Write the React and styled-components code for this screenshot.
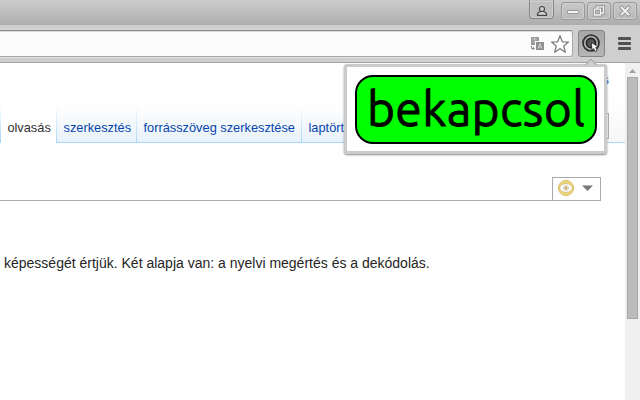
import React from "react";
import styled, { createGlobalStyle } from "styled-components";

const GlobalStyle = createGlobalStyle`
  * { box-sizing: border-box; }
  body { margin: 0; overflow: hidden; background: #fff; }
  button { font: inherit; padding: 0; margin: 0; }
`;

const Browser = styled.div`
  position: relative;
  width: 640px;
  height: 400px;
  overflow: hidden;
  display: flex;
  flex-direction: column;
  background: #fff;
  font-family: "Liberation Sans", Arial, sans-serif;
`;

const TitleBar = styled.header`
  height: 25px;
  flex: none;
  display: flex;
  align-items: flex-start;
  justify-content: flex-end;
  gap: 2px;
  padding: 2px 3px 0 0;
  background: linear-gradient(#cccccc, #adadad);
`;

const WindowButton = styled.button`
  width: 24px;
  height: 18px;
  display: grid;
  place-items: center;
  border: 1px solid #999;
  border-radius: 3px;
  background: linear-gradient(#c8c8c8, #b9b9b9);
  box-shadow: inset 0 0 0 1px #cecece;
`;

const ProfileButton = styled(WindowButton)`
  width: 25px;
  height: 19px;
  margin: -2px 5px 0 0;
  padding-top: 2px;
  border-color: #858585;
  border-top-color: transparent;
  border-radius: 0 0 4px 4px;
  background: #bfbfbf;
`;

const Toolbar = styled.div`
  height: 38px;
  flex: none;
  display: flex;
  align-items: flex-start;
  padding-top: 5px;
  background: #cfcfcf;
  border-bottom: 1px solid #a3a3a3;
`;

const AddressBar = styled.div`
  width: 573px;
  height: 27px;
  display: flex;
  align-items: center;
  justify-content: flex-end;
  gap: 5px;
  padding-right: 2px;
  background: #fcfcfc;
  border: 1px solid #a9a9a9;
  border-left: 0;
  border-top-color: #868686;
  border-radius: 0 3px 3px 0;
  box-shadow: 0 1px #e2e2e2, 0 -1px #d9d9d9, inset 0 1px #e0e0e0;
`;

const ExtensionButton = styled.button`
  width: 27px;
  height: 27px;
  margin-left: 5px;
  display: grid;
  place-items: center;
  border: 1px solid #858585;
  border-radius: 3px;
  background: linear-gradient(#a6a6a6, #b6b6b6);
`;

const MenuButton = styled.button`
  width: 13px;
  height: 27px;
  margin-left: 13px;
  display: grid;
  align-content: center;
  gap: 2px;
  border: 0;
  background: none;
`;

const MenuLine = styled.span`
  height: 3px;
  border-radius: 1px;
  background: #505050;
`;

const Viewport = styled.div`
  flex: 1;
  display: flex;
  min-height: 0;
`;

const Page = styled.main`
  width: 625px;
  display: flex;
  flex-direction: column;
`;

const PageHead = styled.div`
  height: 80px;
  flex: none;
  display: flex;
  flex-direction: column;
  background: linear-gradient(#fff 45%, #f6f6f6);
`;

const UserLinks = styled.div`
  height: 42px;
  padding: 9px 16px 0 0;
  text-align: right;
  color: #0645ad;
  font-size: 12.8px;
  line-height: 15px;
`;

const TabRow = styled.nav`
  height: 38px;
  display: flex;
  border-bottom: 1px solid #a7d7f9;
`;

const Tab = styled.a`
  width: ${(p) => p.$width}px;
  height: 38px;
  flex: none;
  padding: 15px 0 0 ${(p) => (p.$active ? 7.4 : 6.5)}px;
  color: ${(p) => (p.$active ? "#333" : "#0645ad")};
  font-size: 12.8px;
  line-height: 16px;
  white-space: nowrap;
  background:
    linear-gradient(#fff, #a7d7f9) ${(p) => (p.$active ? "left" : "right")} top / 1px 100% no-repeat,
    ${(p) => (p.$active ? "#fff" : "linear-gradient(#fff, #e8f2f8) 0 0 / 100% 37px no-repeat")};
`;

const FirstEdge = styled.span`
  width: 1px;
  height: 38px;
  background: linear-gradient(#fff, #a7d7f9);
`;

const SearchBox = styled.div`
  width: 40px;
  height: 26px;
  margin: 8px 16px 0 auto;
  border: 1px solid #aaa;
  background: #fff;
`;

const TitleRow = styled.div`
  display: flex;
  align-items: flex-end;
  height: 58px;
  flex: none;
`;

const Rule = styled.div`
  width: 552px;
  height: 1px;
  background: #aaa;
`;

const StatusBox = styled.button`
  width: 49px;
  height: 24px;
  display: flex;
  align-items: center;
  gap: 7px;
  padding: 0 0 2px 4px;
  border: 1px solid #aaa;
  background: #fff;
`;

const Paragraph = styled.p`
  margin: 54px 0 0 4px;
  color: #252525;
  font-size: 14px;
  line-height: 16px;
  white-space: nowrap;
`;

const Scrollbar = styled.div`
  width: 15px;
  display: flex;
  flex-direction: column;
  align-items: center;
  background: #f0f0f0;
`;

const ScrollArrow = styled.svg`
  width: 15px;
  height: 14px;
  flex: none;
`;

const ScrollThumb = styled.div`
  width: 11px;
  height: 242px;
  border: 1px solid #a7a7a7;
  background: #bcbcbc;
`;

const Popup = styled.section`
  position: absolute;
  left: 344px;
  top: 64px;
  width: 263px;
  height: 90px;
  padding: 8px;
  border: 3px solid #cbcbcb;
  border-radius: 3px;
  background: #fff;
  box-shadow: 0 1px 2px #888;
`;

const PopupPointer = styled.svg`
  position: absolute;
  left: 234px;
  top: -10px;
`;

const ToggleButton = styled.button`
  display: grid;
  place-items: center;
  width: 242px;
  height: 69px;
  border: 2px solid #000;
  border-radius: 18px;
  background: #00ff00;
  color: #000;
`;

const ToggleLabel = styled.span`
  margin-top: -3px;
  font-family: Ubuntu, "Noto Sans", sans-serif;
  font-size: 48px;
  line-height: 64px;
  letter-spacing: 0.3px;
  -webkit-text-stroke: 0.8px #000;
`;

const PersonIcon = () => (
  <svg width="12" height="12" viewBox="0 0 12 12">
    <circle cx="6" cy="4" r="2.5" fill="#d2d2d2" stroke="#444" strokeWidth="1.2" />
    <path d="M1.5 10.4V9C1.5 7.5 3 7 4.4 6.5h3.2C9 7 10.5 7.5 10.5 9v1.4Z" fill="#d2d2d2" stroke="#444" strokeWidth="1.2" />
  </svg>
);

const MinimizeIcon = () => (
  <svg width="14" height="12" viewBox="0 0 14 12">
    <rect x="1.5" y="5.5" width="11" height="3" rx=".5" fill="#f2f2f2" stroke="#999" />
  </svg>
);

const RestoreIcon = () => (
  <svg width="14" height="12" viewBox="0 0 14 12" fill="none">
    <path d="M5 4V1.8h6.5V8H9M2.5 4.2h6V10h-6Z" stroke="#929292" strokeWidth="3" />
    <path d="M5 4V1.8h6.5V8H9M2.5 4.2h6V10h-6Z" stroke="#f2f2f2" strokeWidth="1.3" />
  </svg>
);

const CloseIcon = () => (
  <svg width="14" height="12" viewBox="0 0 14 12" fill="none" strokeLinecap="square">
    <path d="m3.5 2.5 7 7m0-7-7 7" stroke="#929292" strokeWidth="3.5" />
    <path d="m3.5 2.5 7 7m0-7-7 7" stroke="#f2f2f2" strokeWidth="1.9" />
  </svg>
);

const TranslateIcon = () => (
  <svg width="15" height="15" viewBox="0 0 15 15">
    <path d="M1 1h8v4H5v4H1Z" fill="#9a9a9a" />
    <path d="M2.5 3h4M4.5 2v2.5M3 6.5 5 4" stroke="#c8c8c8" fill="none" />
    <path d="M6 6h8v8H6Z" fill="#8f8f8f" />
    <path d="m8 12.5 2-5 2 5M8.7 11h2.6" stroke="#d5d5d5" fill="none" />
    <path d="M1.5 10v2.5H4M2.8 11l1.5 1.5L2.8 14" stroke="#888" fill="none" />
  </svg>
);

const StarIcon = () => (
  <svg width="20" height="20" viewBox="0 0 20 20">
    <path d="m10 1.8 2.3 6 6.2.3-4.8 3.9 1.7 6.2-5.4-3.5-5.4 3.5L6.3 12 1.5 8.1l6.2-.3Z" fill="#fff" stroke="#777" strokeWidth="1.2" strokeLinejoin="round" />
  </svg>
);

const ClickIcon = () => (
  <svg width="19" height="19" viewBox="0 0 19 19">
    <circle cx="9" cy="9" r="8" fill="none" stroke="#303030" strokeWidth="1.7" />
    <circle cx="9" cy="9" r="4.6" fill="#555" stroke="#222" strokeWidth="1.6" />
    <path d="m9.5 8.5.3 7.6 1.8-1.7 1.5 3.1 2.1-1-1.4-3.1 2.6-.4Z" fill="#fff" stroke="#222" strokeWidth=".8" />
  </svg>
);

const EyeIcon = () => (
  <svg width="18" height="18" viewBox="0 0 18 18">
    <circle cx="9" cy="9" r="7.6" fill="#edd67c" stroke="#dec16a" />
    <ellipse cx="9" cy="9" rx="6.2" ry="4.3" fill="#fff" stroke="#c4b583" strokeWidth=".7" />
    <circle cx="9" cy="9" r="2.7" fill="#f3f1e8" stroke="#c0bdb0" strokeWidth=".5" />
    <circle cx="9" cy="9" r="1.5" fill="#c5a347" />
  </svg>
);

export default function App() {
  return (
    <Browser>
      <GlobalStyle />
      <TitleBar>
        <ProfileButton><PersonIcon /></ProfileButton>
        <WindowButton><MinimizeIcon /></WindowButton>
        <WindowButton><RestoreIcon /></WindowButton>
        <WindowButton><CloseIcon /></WindowButton>
      </TitleBar>
      <Toolbar>
        <AddressBar><TranslateIcon /><StarIcon /></AddressBar>
        <ExtensionButton><ClickIcon /></ExtensionButton>
        <MenuButton><MenuLine /><MenuLine /><MenuLine /></MenuButton>
      </Toolbar>
      <Viewport>
        <Page>
          <PageHead>
            <UserLinks>s</UserLinks>
            <TabRow>
              <Tab $active $width={56}>olvasás</Tab>
              <FirstEdge />
              <Tab $width={80}>szerkesztés</Tab>
              <Tab $width={165}>forrásszöveg szerkesztése</Tab>
              <Tab $width={80}>laptörténet</Tab>
              <SearchBox />
            </TabRow>
          </PageHead>
          <TitleRow>
            <Rule />
            <StatusBox>
              <EyeIcon />
              <svg width="11" height="6" viewBox="0 0 11 6"><path d="M0 .5h11L5.5 6Z" fill="#777" /></svg>
            </StatusBox>
          </TitleRow>
          <Paragraph>képességét értjük. Két alapja van: a nyelvi megértés és a dekódolás.</Paragraph>
        </Page>
        <Scrollbar>
          <ScrollArrow viewBox="0 0 15 14"><path d="m4 10 3.5-4 3.5 4Z" fill="#a0a0a0" /></ScrollArrow>
          <ScrollThumb />
        </Scrollbar>
      </Viewport>
      <Popup>
        <PopupPointer width="20" height="10" viewBox="0 0 20 10">
          <path d="m4 8 6-6 6 6" fill="#cbcbcb" stroke="#999" />
          <path d="M3 8h14v2H3Z" fill="#cbcbcb" />
        </PopupPointer>
        <ToggleButton><ToggleLabel>bekapcsol</ToggleLabel></ToggleButton>
      </Popup>
    </Browser>
  );
}
